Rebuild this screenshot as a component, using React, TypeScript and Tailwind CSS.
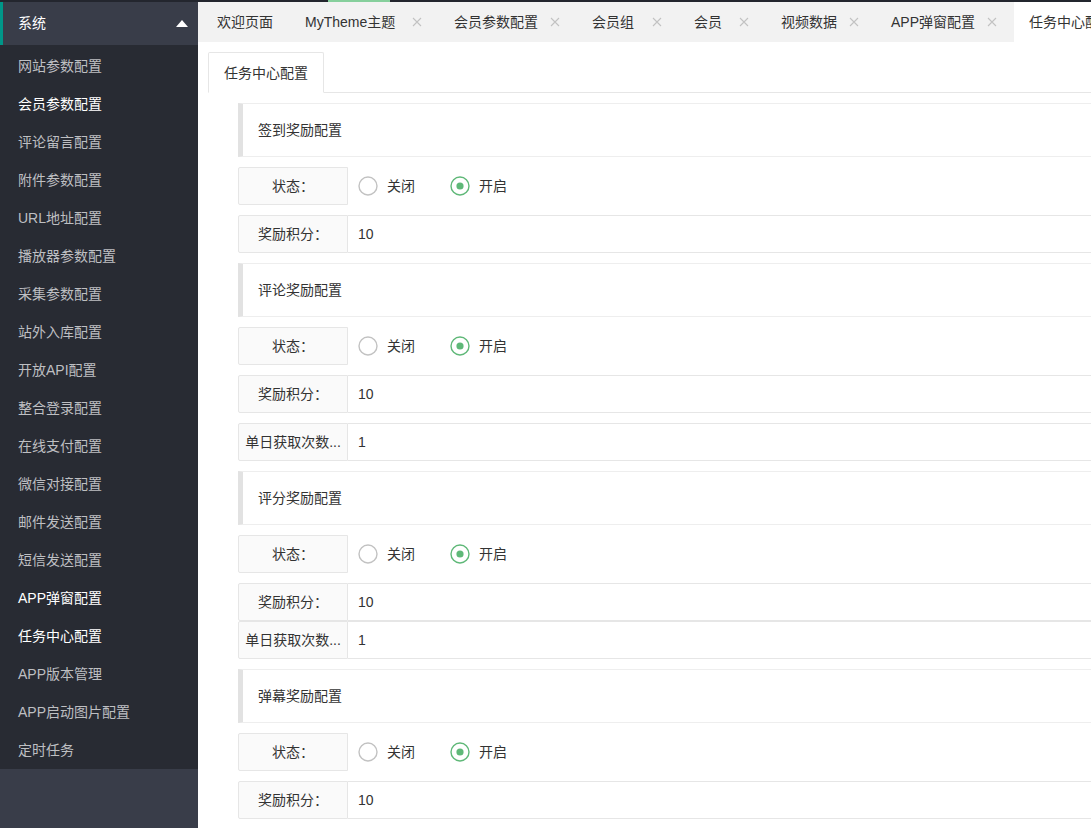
import React from 'react';

const menuItems = [
  { label: '网站参数配置' },
  { label: '会员参数配置', active: true },
  { label: '评论留言配置' },
  { label: '附件参数配置' },
  { label: 'URL地址配置' },
  { label: '播放器参数配置' },
  { label: '采集参数配置' },
  { label: '站外入库配置' },
  { label: '开放API配置' },
  { label: '整合登录配置' },
  { label: '在线支付配置' },
  { label: '微信对接配置' },
  { label: '邮件发送配置' },
  { label: '短信发送配置' },
  { label: 'APP弹窗配置', active: true },
  { label: '任务中心配置', active: true },
  { label: 'APP版本管理' },
  { label: 'APP启动图片配置' },
  { label: '定时任务' },
];

// 顶部标签页，宽度按截图量出
const pageTabs = [
  { label: '欢迎页面', w: 'w-[88px]', close: false },
  { label: 'MyTheme主题', w: 'w-[149px]', close: true },
  { label: '会员参数配置', w: 'w-[138px]', close: true },
  { label: '会员组', w: 'w-[102px]', close: true },
  { label: '会员', w: 'w-[87px]', close: true },
  { label: '视频数据', w: 'w-[110px]', close: true },
  { label: 'APP弹窗配置', w: 'w-[138px]', close: true },
];

type Row =
  | { type: 'quote'; title: string }
  | { type: 'radio'; label: string }
  | { type: 'input'; label: string; value: string; tight?: boolean };

const rows: Row[] = [
  { type: 'quote', title: '签到奖励配置' },
  { type: 'radio', label: '状态：' },
  { type: 'input', label: '奖励积分：', value: '10' },
  { type: 'quote', title: '评论奖励配置' },
  { type: 'radio', label: '状态：' },
  { type: 'input', label: '奖励积分：', value: '10' },
  { type: 'input', label: '单日获取次数...', value: '1' },
  { type: 'quote', title: '评分奖励配置' },
  { type: 'radio', label: '状态：' },
  { type: 'input', label: '奖励积分：', value: '10' },
  { type: 'input', label: '单日获取次数...', value: '1', tight: true },
  { type: 'quote', title: '弹幕奖励配置' },
  { type: 'radio', label: '状态：' },
  { type: 'input', label: '奖励积分：', value: '10' },
];

const CloseIcon = () => (
  <svg width="10" height="10" viewBox="0 0 10 10" className="shrink-0">
    <path d="M1 1L9 9M9 1L1 9" stroke="#c2c2c2" strokeWidth="1.1" />
  </svg>
);

const RadioIcon: React.FC<{ checked?: boolean }> = ({ checked }) => (
  <svg width="20" height="20" viewBox="0 0 20 20" className="shrink-0">
    <circle cx="10" cy="10" r="9" fill="none" stroke={checked ? '#5fb878' : '#c2c2c2'} strokeWidth="1.4" />
    {checked && <circle cx="10" cy="10" r="3.6" fill="#5fb878" />}
  </svg>
);

const Label: React.FC<{ text: string }> = ({ text }) => (
  <div className="w-[110px] shrink-0 h-full border border-[#e6e6e6] rounded-l-[2px] bg-[#fafafa] text-center leading-[36px] px-[5px] whitespace-nowrap overflow-hidden text-[#333]">
    {text}
  </div>
);

const App: React.FC = () => {
  return (
    <div className="flex h-[828px] w-[1091px] overflow-hidden bg-white text-[14px] font-['Liberation_Sans','Noto_Sans_CJK_SC',sans-serif]">
      {/* 左侧菜单 */}
      <aside className="w-[198px] shrink-0 flex flex-col bg-[#393d49]">
        <div className="h-[2px] bg-[#23262e]" />
        <div className="h-[43px] flex items-center justify-between border-l-[3px] border-[#009688] pl-[15px] pr-[10px] text-white">
          <span>系统</span>
          <svg width="12" height="7" viewBox="0 0 12 7">
            <path d="M0 7L6 0L12 7Z" fill="#fff" />
          </svg>
        </div>
        <div className="bg-[#282b33] pt-[2px]">
          {menuItems.map((item) => (
            <div
              key={item.label}
              className={`h-[38px] flex items-center pl-[18px] ${item.active ? 'text-white' : 'text-[#bebfc2]'}`}
            >
              {item.label}
            </div>
          ))}
        </div>
      </aside>

      {/* 右侧主体 */}
      <main className="flex-1 min-w-0 flex flex-col">
        <div className="h-[2px] bg-[#23262e] relative">
          <span className="absolute left-[130px] top-0 h-full w-[62px] bg-[#86cf9c]" />
        </div>
        <div className="h-[40px] bg-[#f2f2f2] flex pl-[4px] text-[#333] whitespace-nowrap">
          {pageTabs.map((tab) => (
            <div
              key={tab.label}
              className={`${tab.w} shrink-0 h-full flex items-center justify-between pl-[15px] pr-[17px]`}
            >
              <span>{tab.label}</span>
              {tab.close && <CloseIcon />}
            </div>
          ))}
          <div className="w-[160px] shrink-0 h-full flex items-center pl-[15px] bg-white">任务中心配置</div>
        </div>

        <div className="pl-[10px] pt-[10px] text-[#333] w-[1000px]">
          <div className="h-[41px] flex border-b border-[#e6e6e6]">
            <div className="h-[41px] px-[15px] leading-[40px] bg-white border border-[#e6e6e6] border-b-white rounded-t-[2px]">
              任务中心配置
            </div>
          </div>

          <div className="pl-[30px]">
            {rows.map((row, i) => {
              if (row.type === 'quote') {
                return (
                  <div
                    key={i}
                    className="mt-[10px] h-[54px] flex items-center border border-[#eee] border-l-[5px] border-l-[#e2e2e2] pl-[15px]"
                  >
                    {row.title}
                  </div>
                );
              }
              if (row.type === 'radio') {
                return (
                  <div key={i} className="mt-[10px] h-[38px] flex">
                    <Label text={row.label} />
                    <div className="flex items-center pl-[10px]">
                      <RadioIcon />
                      <span className="ml-[9px]">关闭</span>
                      <span className="ml-[35px]">
                        <RadioIcon checked />
                      </span>
                      <span className="ml-[9px]">开启</span>
                    </div>
                  </div>
                );
              }
              return (
                <div key={i} className={`${row.tight ? '' : 'mt-[10px]'} h-[38px] flex`}>
                  <Label text={row.label} />
                  <div className="flex-1 border border-l-0 border-[#e6e6e6] flex items-center pl-[10px]">
                    {row.value}
                  </div>
                </div>
              );
            })}
          </div>
        </div>
      </main>
    </div>
  );
};

export default App;
